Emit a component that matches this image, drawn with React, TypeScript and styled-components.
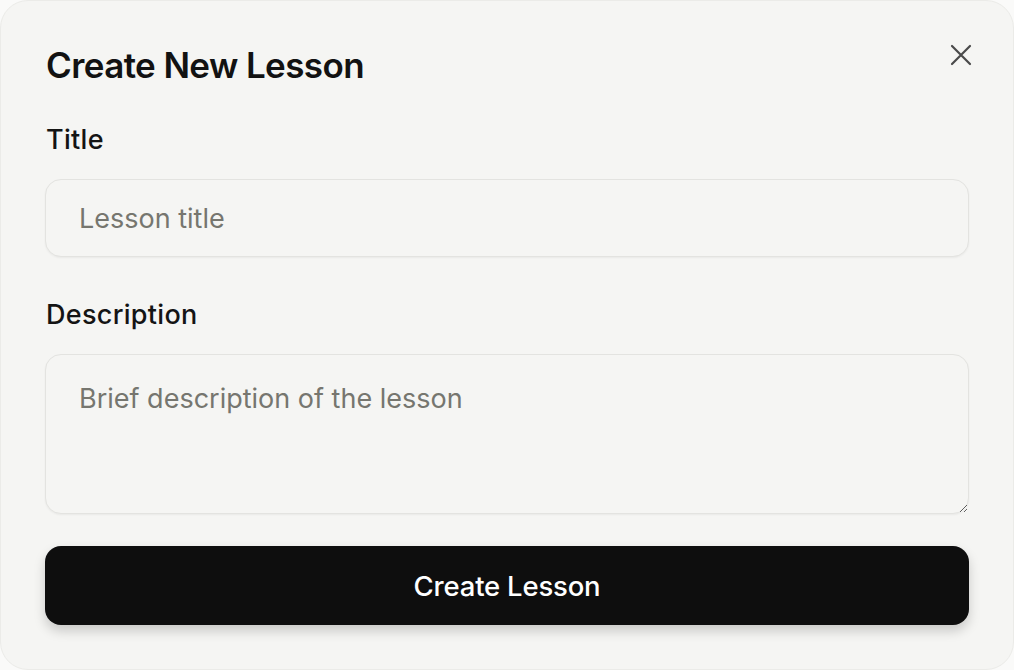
import React from "react";
import styled, { createGlobalStyle } from "styled-components";

const Global = createGlobalStyle`
  html, body {
    margin: 0;
    padding: 0;
    background: #fafaf9;
  }
  * {
    box-sizing: border-box;
  }
`;

function App() {
  return (
    <>
      <Global />
      <Dialog>
        <Header>
          <Heading>Create New Lesson</Heading>
          <Close aria-label="Close">
            <svg width="22" height="22" viewBox="0 0 22 22" fill="none">
              <path d="M2 2L20 20M20 2L2 20" stroke="#4a4a4a" strokeWidth="2.2" strokeLinecap="round" />
            </svg>
          </Close>
        </Header>
        <Form>
          <Fields>
            <Field>
              <Label>Title</Label>
              <Input placeholder="Lesson title" />
            </Field>
            <Field>
              <Label>Description</Label>
              <TextArea placeholder="Brief description of the lesson" />
            </Field>
          </Fields>
          <Submit type="button">Create Lesson</Submit>
        </Form>
      </Dialog>
    </>
  );
}

export default App;

const Dialog = styled.div`
  width: 1014px;
  height: 670px;
  background: #f5f5f3;
  border: 1px solid #ebebe8;
  border-radius: 28px;
  padding: 39px 44px 0 44px;
  font-family: Inter, "Noto Sans", sans-serif;
  color: #111;
  display: flex;
  flex-direction: column;
`;

const Header = styled.div`
  display: flex;
  justify-content: space-between;
  align-items: flex-start;
  padding-left: 1px;
`;

const Heading = styled.h2`
  margin: 0;
  font-size: 35px;
  font-weight: 600;
  letter-spacing: -0.6px;
  line-height: 50px;
  color: #121212;
`;

const Close = styled.button`
  border: none;
  background: none;
  padding: 0;
  margin: 4px -3px 0 0;
  width: 22px;
  height: 22px;
  display: flex;
  cursor: pointer;
`;

const Form = styled.div`
  display: flex;
  flex-direction: column;
  gap: 32px;
  margin-top: 35px;
`;

const Fields = styled.div`
  display: flex;
  flex-direction: column;
  gap: 43px;
`;

const Field = styled.div`
  display: flex;
  flex-direction: column;
  gap: 24px;
`;

const Label = styled.label`
  font-size: 27px;
  font-weight: 500;
  line-height: 30px;
  color: #141414;
  letter-spacing: 0.3px;
  padding-left: 1px;
`;

const baseField = `
  width: 100%;
  border: 1px solid #e3e3e0;
  border-radius: 16px;
  background: #f5f5f3;
  font-family: Inter, "Noto Sans", sans-serif;
  font-size: 27px;
  color: #111;
  padding: 0 33px;
  outline: none;
  box-shadow: 0 1px 2px rgba(0, 0, 0, 0.05);
  &::placeholder {
    color: #76766f;
  }
`;

const Input = styled.input`
  ${baseField}
  height: 78px;
`;

const TextArea = styled.textarea`
  ${baseField}
  height: 160px;
  padding-top: 28px;
  line-height: 32px;
  resize: vertical;
`;

const Submit = styled.button`
  width: 100%;
  height: 79px;
  border: none;
  border-radius: 16px;
  background: #0e0e0e;
  color: #fff;
  font-family: Inter, "Noto Sans", sans-serif;
  font-size: 27.5px;
  font-weight: 500;
  letter-spacing: -0.2px;
  box-shadow: 0 6px 12px rgba(0, 0, 0, 0.18);
  cursor: pointer;
`;
